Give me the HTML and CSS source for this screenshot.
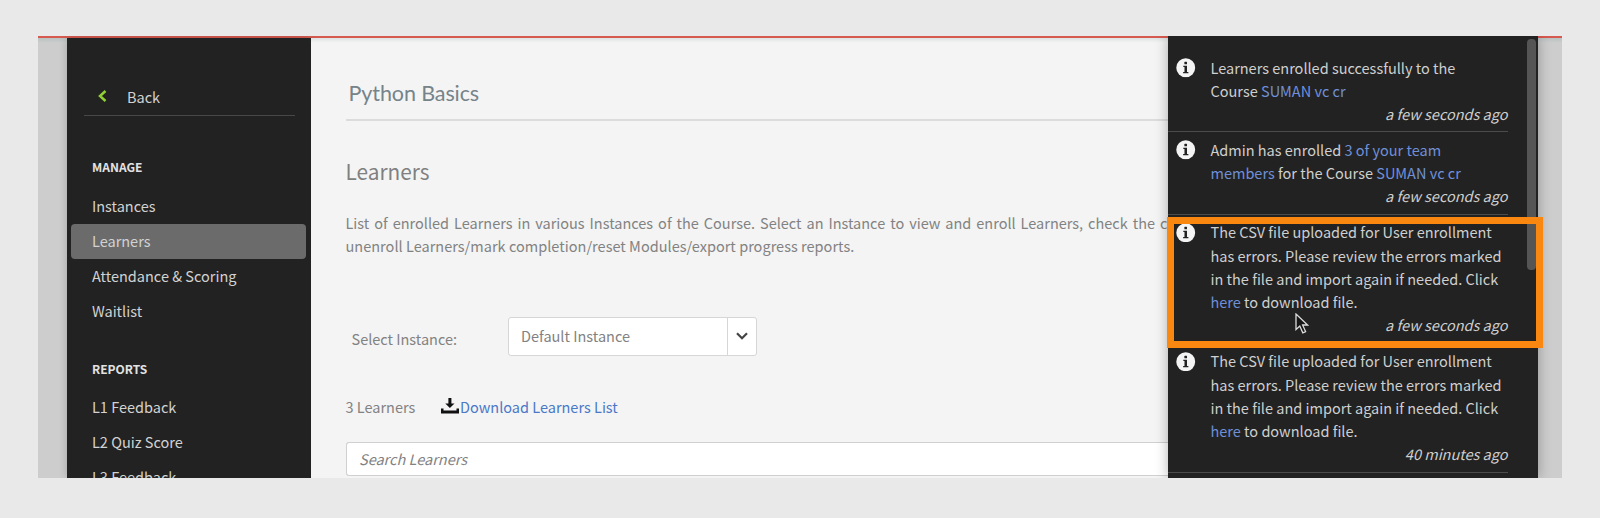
FILE: index.html
```html
<!DOCTYPE html>
<html lang="en">
<head>
<meta charset="utf-8">
<title>Python Basics - Learners</title>
<link rel="stylesheet" href="styles.css">
</head>
<body>
<svg class="defs" aria-hidden="true">
  <symbol id="info" viewBox="0 0 20 20">
    <circle cx="10" cy="10" r="9.7" fill="#f4f4f4"/>
    <rect x="8.600" y="3.900" width="2.700" height="2.500" rx=".6" fill="#222"/>
    <path d="M7.500 8h3.800v6.400h1.400v1.300H7.300v-1.300h1.400V9.300H7.500z" fill="#222"/>
  </symbol>
</svg>
<div class="app">
  <nav class="sidebar">
    <a class="back"><svg class="back-icon" viewBox="0 0 9 12"><path d="M7.500 1 2 6l5.500 5" fill="none" stroke="#8fd133" stroke-width="2.500"/></svg><span>Back</span></a>
    <h3 class="group">MANAGE</h3>
    <ul class="menu">
      <li>Instances</li>
      <li class="active">Learners</li>
      <li>Attendance &amp; Scoring</li>
      <li>Waitlist</li>
    </ul>
    <h3 class="group reports">REPORTS</h3>
    <ul class="menu">
      <li>L1 Feedback</li>
      <li>L2 Quiz Score</li>
      <li>L3 Feedback</li>
    </ul>
  </nav>
  <main class="content">
    <h1 class="course"><span>Python Basics</span></h1>
    <h2 class="heading">Learners</h2>
    <p class="intro"><span class="spread">List of enrolled Learners in various Instances of the Course. Select an Instance to view and enroll Learners, check the c</span><br><span class="last">unenroll Learners/mark completion/reset Modules/export progress reports.</span></p>
    <div class="instance">
      <span class="label">Select Instance:</span>
      <div class="select"><span class="value">Default Instance</span><span class="arrow"><svg viewBox="0 0 12 8"><path d="m1 1.300 5 5 5-5" fill="none" stroke="#444" stroke-width="2.200"/></svg></span></div>
    </div>
    <div class="tools">
      <span class="count">3 Learners</span>
      <svg class="download-icon" viewBox="0 0 18 16"><path d="M7.400 0h3v5.500h3.100L8.900 10 4.300 5.500h3.100zM0 10.500h2.500v2h13v-2H18v5H0z" fill="#111"/></svg>
      <a class="link">Download Learners List</a>
    </div>
    <div class="search">Search Learners</div>
  </main>
  <aside class="panel">
    <div class="list">
      <article class="note"><svg class="info"><use href="#info"/></svg><div class="body"><p>Learners enrolled successfully to the<br>Course <a>SUMAN vc cr</a></p><time>a few seconds ago</time></div></article>
      <article class="note"><svg class="info"><use href="#info"/></svg><div class="body"><p>Admin has enrolled <a>3 of your team<br>members</a> for the Course <a>SUMAN vc cr</a></p><time>a few seconds ago</time></div></article>
      <article class="note"><svg class="info"><use href="#info"/></svg><div class="body"><p>The CSV file uploaded for User enrollment<br>has errors. Please review the errors marked<br>in the file and import again if needed. Click<br><a>here</a> to download file.</p><time>a few seconds ago</time></div></article>
      <article class="note"><svg class="info"><use href="#info"/></svg><div class="body"><p>The CSV file uploaded for User enrollment<br>has errors. Please review the errors marked<br>in the file and import again if needed. Click<br><a>here</a> to download file.</p><time>40 minutes ago</time></div></article>
    </div>
    <div class="scrollbar"></div>
  </aside>
</div>
<div class="highlight"></div>
<svg class="cursor" viewBox="0 0 14 21"><path d="M1 1v15.500l3.800-3.500 3 6.800 2.800-1.200-3-6.600h5z" fill="#161616" stroke="#ddd" stroke-width="1.300"/></svg>
</body>
</html>
```
FILE: styles.css
```css
* { box-sizing: border-box; margin: 0; padding: 0; }
body {
  height: 518px;
  padding: 36px 38px 40px;
  overflow: hidden;
  background: #e9e9e9;
  font-family: "Noto Sans CJK SC", "Noto Sans", sans-serif;
  font-size: 14.500px;
  color: #828282;
}
.defs { position: absolute; width: 0; height: 0; }
.app {
  display: flex;
  height: 442px;
  padding: 0 24px 0 28.500px;
  overflow: hidden;
  background: linear-gradient(#d75a50 0 2px, #b9c3c2 2px, #cdcdcd 7px);
}
.sidebar {
  width: 244.500px;
  margin-top: 2px;
  padding-top: 42px;
  flex: none;
  background: #222;
  color: #d2d2d2;
  box-shadow: 0 0 8px rgba(0, 0, 0, .2);
}
.back {
  display: flex;
  align-items: center;
  height: 36px;
  margin: 0 16px 0 17.500px;
  padding: 0 0 3px 13.500px;
  gap: 20.500px;
  border-bottom: 1.500px solid #474747;
}
.back-icon { width: 9px; height: 12px; }
.group {
  margin: 41px 0 0 25.500px;
  font-size: 12px;
  line-height: 20px;
  font-weight: 700;
  color: #e2e2e2;
}
.group.reports { margin-top: 31px; }
.menu { list-style: none; margin: 12px 5px 0 4.500px; }
.reports + .menu { margin-top: 10px; }
.menu li { height: 35px; padding-left: 21px; line-height: 33px; border-radius: 4px; }
.menu .active { background: #6b6b6b; }
.reports { position: relative; top: -1px; }
.content {
  width: 857px;
  flex: none;
  margin-top: 2px;
  padding-left: 34.500px;
  background: linear-gradient(#dfe3e3, #f4f4f4 5px);
  white-space: nowrap;
  overflow: hidden;
}
.course {
  height: 83px;
  padding: 42px 0 0 3px;
  border-bottom: 2px solid #dcdcdc;
  font: 400 21.500px/26px Lato, sans-serif;
  letter-spacing: -.1px;
  color: #75838a;
}
.heading { margin-top: 34px; font-size: 20.800px; line-height: 32px; font-weight: 400; color: #808080; }
.intro { margin-top: 24px; line-height: 23.300px; }
.spread { word-spacing: 1.700px; }
.last { letter-spacing: .02px; }
.instance { display: flex; margin-top: 59px; padding-left: 6px; height: 39px; }
.label { width: 156.500px; line-height: 44px; }
.select {
  display: flex;
  width: 249px;
  border: 1.500px solid #d6d6d6;
  border-radius: 3px;
  background: #fff;
}
.value { flex: 1; padding-left: 12px; line-height: 36px; }
.arrow { display: grid; place-items: center; width: 29px; border-left: 1px solid #d6d6d6; }
.arrow svg { width: 12px; height: 8px; }
.tools { display: flex; align-items: center; height: 24px; margin-top: 39px; }
.count { width: 95px; }
.download-icon { width: 18px; height: 16px; margin: -1px 1.500px 0 0; }
.link { color: #4a78c8; }
.search {
  height: 34px;
  margin-top: 23.500px;
  padding-left: 12.500px;
  line-height: 31px;
  border: 1.500px solid #d0d0d0;
  border-right: 0;
  border-radius: 3px 0 0 3px;
  background: #fff;
  font-style: italic;
}
.panel {
  display: flex;
  justify-content: space-between;
  width: 370px;
  flex: none;
  padding: 14px 2px 0 0;
  background: #222;
  color: #cfcfcf;
  box-shadow: 0 0 12px rgba(0, 0, 0, .3);
  z-index: 1;
}
.list { width: 339.500px; }
.note {
  display: flex;
  gap: 15px;
  padding: 5.500px 0 6.200px 8px;
  border-bottom: 1px solid #4c4c4c;
  line-height: 23.250px;
  white-space: nowrap;
}
.info { width: 19.500px; height: 19.500px; margin-top: 2.500px; flex: none; }
.body { flex: 1; }
.body a { color: #6f90d8; }
.body time { display: block; text-align: right; font-style: italic; }
.scrollbar { width: 9px; height: 231px; margin-top: -11px; border-radius: 4px; background: #555; }
.highlight {
  position: absolute;
  left: 1167px;
  top: 217px;
  width: 376px;
  height: 131px;
  border: 7px solid #f98710;
  z-index: 2;
}
.cursor { position: absolute; left: 1295px; top: 312.500px; width: 14px; height: 21px; z-index: 3; }
```
